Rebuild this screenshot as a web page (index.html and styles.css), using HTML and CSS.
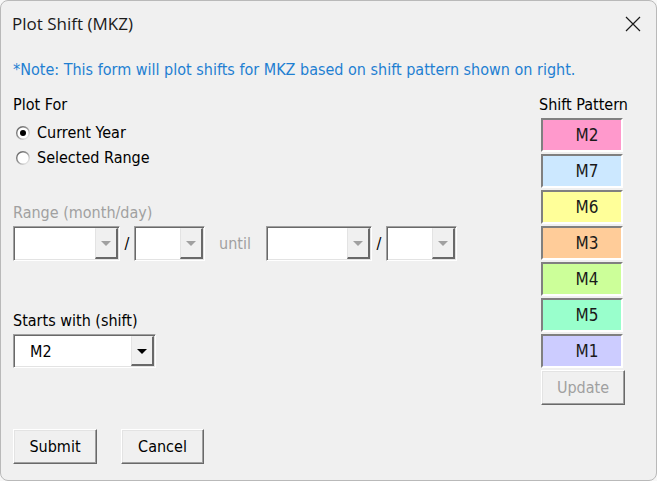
FILE: index.html
```html
<!DOCTYPE html>
<html>
<head>
<meta charset="utf-8">
<title>Plot Shift (MKZ)</title>
<link rel="stylesheet" href="styles.css">
</head>
<body>
<div class="window">
  <div class="titlebar">
    <span class="title">Plot Shift (MKZ)</span>
    <svg class="close" width="16" height="16" viewBox="0 0 16 16"><path d="M1 1 L15 15 M15 1 L1 15" stroke="#1a1a1a" stroke-width="1.2" fill="none"/></svg>
  </div>
  <div class="note">*Note: This form will plot shifts for MKZ based on shift pattern shown on right.</div>
  <div class="content">
    <div class="left">
      <div class="label">Plot For</div>
      <div class="radio-row first">
        <svg class="radio" width="14" height="14" viewBox="0 0 14 14"><defs><linearGradient id="rg" x1="0" y1="0" x2="1" y2="1"><stop offset="0" stop-color="#5a5a5a"/><stop offset="0.5" stop-color="#9a9a9a"/><stop offset="1" stop-color="#ffffff"/></linearGradient></defs><circle cx="7" cy="7" r="6.3" fill="#fff" stroke="url(#rg)" stroke-width="1.4"/><circle cx="7" cy="7" r="3" fill="#000"/></svg>
        <span>Current Year</span>
      </div>
      <div class="radio-row second">
        <svg class="radio" width="14" height="14" viewBox="0 0 14 14"><circle cx="7" cy="7" r="6.3" fill="#fff" stroke="url(#rg)" stroke-width="1.4"/></svg>
        <span>Selected Range</span>
      </div>
      <div class="label disabled range-label">Range (month/day)</div>
      <div class="range-row">
        <div class="combo w-month"><div class="combo-field"></div><div class="combo-btn"><span class="arrow dim"></span></div></div>
        <span class="slash">/</span>
        <div class="combo w-day"><div class="combo-field"></div><div class="combo-btn"><span class="arrow dim"></span></div></div>
        <span class="until">until</span>
        <div class="combo w-month2"><div class="combo-field"></div><div class="combo-btn"><span class="arrow dim"></span></div></div>
        <span class="slash">/</span>
        <div class="combo w-day"><div class="combo-field"></div><div class="combo-btn"><span class="arrow dim"></span></div></div>
      </div>
      <div class="label starts-label">Starts with (shift)</div>
      <div class="combo w-shift"><div class="combo-field">M2</div><div class="combo-btn"><span class="arrow"></span></div></div>
      <div class="buttons">
        <div class="btn">Submit</div>
        <div class="btn">Cancel</div>
      </div>
    </div>
    <div class="right">
      <div class="label">Shift Pattern</div>
      <div class="swatches">
        <div class="swatch m2">M2</div>
        <div class="swatch m7">M7</div>
        <div class="swatch m6">M6</div>
        <div class="swatch m3">M3</div>
        <div class="swatch m4">M4</div>
        <div class="swatch m5">M5</div>
        <div class="swatch m1">M1</div>
        <div class="btn update">Update</div>
      </div>
    </div>
  </div>
</div>
</body>
</html>
```
FILE: styles.css
```css
* { box-sizing: border-box; }
html, body { margin: 0; padding: 0; background: #f7f7f7; }
body { width: 657px; height: 481px; overflow: hidden; }

.window {
  width: 657px;
  height: 481px;
  background: #f0f0f0;
  border: 1px solid #b9b9b9;
  border-radius: 8px;
  display: flex;
  flex-direction: column;
  font-family: "DejaVu Sans Condensed", "DejaVu Sans", sans-serif;
  font-stretch: semi-condensed;
  font-size: 16px;
  line-height: 19px;
  color: #000;
}

.titlebar {
  height: 44px;
  display: flex;
  align-items: center;
  justify-content: space-between;
  padding: 0 15px 0 11px;
}
.title {
  font-family: "Open Sans", "Noto Sans", sans-serif;
  font-size: 17px;
  color: #1b1b1b;
  font-stretch: normal;
}
.close { display: block; margin-top: 2px; }

.note {
  margin: 15px 0 0 12px;
  color: #1e7fd2;
}

.content {
  display: flex;
  margin-top: 16px;
  padding: 0 31px 0 12px;
  flex: 1;
}
.left {
  flex: 1;
  display: flex;
  flex-direction: column;
  align-items: flex-start;
}
.label { white-space: nowrap; }
.disabled { color: #a0a0a0; }

.radio-row { display: flex; align-items: center; gap: 7px; padding-left: 3px; }
.radio-row.first { margin-top: 9px; }
.radio-row.second { margin-top: 6px; }
.radio { display: block; flex: none; }

.range-label { margin-top: 36px; }
.range-row { display: flex; align-items: center; margin-top: 4px; }
.slash { width: 14px; text-align: center; color: #000; }
.until { color: #a0a0a0; margin: 0 15px 0 14px; }

.combo {
  height: 35px;
  display: flex;
  background: #fff;
  border: 1px solid;
  border-color: #a0a0a0 #ffffff #ffffff #a0a0a0;
  box-shadow: inset 1px 1px 0 #696969, inset -1px -1px 0 #e3e3e3;
  padding: 1px 1px 1px 1px;
}
.w-month { width: 107px; }
.w-day { width: 71px; }
.w-month2 { width: 106px; }
.w-shift { width: 143px; height: 34px; margin-top: 4px; }

.combo-field {
  flex: 1;
  padding-left: 15px;
  display: flex;
  align-items: center;
  color: #000;
}
.combo-btn {
  width: 23px;
  flex: none;
  background: #f0f0f0;
  border-top: 1px solid #f0f0f0;
  border-left: 1px solid #e3e3e3;
  border-right: 2px solid #696969;
  border-bottom: 2px solid #696969;
  display: flex;
  align-items: center;
  justify-content: center;
}
.arrow {
  width: 0; height: 0;
  border-left: 5px solid transparent;
  border-right: 5px solid transparent;
  border-top: 5px solid #000;
  margin-top: 1px;
}
.arrow.dim { border-top-color: #a0a0a0; }

.starts-label { margin-top: 50px; }

.buttons { display: flex; gap: 24px; margin-top: 61px; }
.btn {
  width: 84px;
  height: 35px;
  display: flex;
  align-items: center;
  justify-content: center;
  background: #f0f0f0;
  border: 1px solid;
  border-color: #ffffff #696969 #696969 #ffffff;
  box-shadow: inset -1px -1px 0 #a0a0a0, inset 1px 1px 0 #e3e3e3;
  color: #000;
}
.btn + .btn { width: 83px; }

.right {
  width: 86px;
  display: flex;
  flex-direction: column;
  align-items: flex-start;
}
.swatches {
  display: flex;
  flex-direction: column;
  gap: 2px;
  margin-top: 4px;
  padding-left: 2px;
}
.swatch {
  width: 82px;
  height: 34px;
  display: flex;
  align-items: center;
  justify-content: center;
  padding-left: 10px;
  border: 2px solid;
  border-color: #808080 #ffffff #ffffff #808080;
  color: #1a1a1a;
  font-size: 17px;
}
.m2 { background: #ff99cc; }
.m7 { background: #cce8ff; }
.m6 { background: #ffff99; }
.m3 { background: #ffcc99; }
.m4 { background: #ccff99; }
.m5 { background: #99ffcc; }
.m1 { background: #ccccff; }
.btn.update { width: 84px; color: #a0a0a0; }
```
